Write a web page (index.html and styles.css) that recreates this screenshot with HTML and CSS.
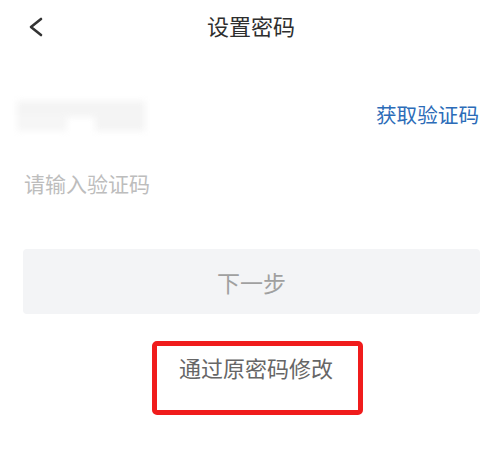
FILE: index.html
```html
<!DOCTYPE html>
<html lang="zh">
<head>
<meta charset="utf-8">
<link rel="stylesheet" href="styles.css">
</head>
<body>
<div class="page">
  <header class="header">
    <svg class="back" width="16" height="20" viewBox="0 0 16 20"><path d="M13 2 L3 10 L13 18" fill="none" stroke="#333" stroke-width="2.6" stroke-linecap="round" stroke-linejoin="round"/></svg>
    <h1 class="title">设置密码</h1>
  </header>
  <div class="phone-row">
    <div class="phone-blur">
      <span class="blur-a"></span>
      <span class="blur-b"></span>
      <span class="blur-c"></span>
    </div>
    <span class="get-code">获取验证码</span>
  </div>
  <div class="code-row">
    <span class="placeholder">请输入验证码</span>
  </div>
  <button class="next">下一步</button>
  <div class="alt-wrap">
    <div class="alt-box">通过原密码修改</div>
  </div>
</div>
</body>
</html>
```
FILE: styles.css
```css
html, body {
  margin: 0;
  padding: 0;
  background: #fff;
}
body {
  font-family: "Noto Sans CJK SC", "Noto Sans", sans-serif;
}
.page {
  width: 494px;
  height: 471px;
  display: flex;
  flex-direction: column;
}
.header {
  position: relative;
  height: 50px;
  display: flex;
  align-items: center;
  justify-content: center;
  padding-left: 8px;
}
.back {
  position: absolute;
  left: 28px;
  top: 17px;
}
.title {
  margin: 0;
  font-size: 22px;
  font-weight: 400;
  color: #2e2e2e;
  line-height: 1;
}
.phone-row {
  display: flex;
  align-items: center;
  justify-content: space-between;
  height: 36px;
  margin-top: 48px;
  padding: 0 15px 0 15px;
}
.phone-blur {
  width: 132px;
  height: 34px;
  position: relative;
  filter: blur(3px);
}
.blur-a {
  position: absolute;
  left: 2px;
  top: 2px;
  width: 128px;
  height: 16px;
  background: #f4f4f4;
}
.blur-b {
  position: absolute;
  left: 2px;
  top: 16px;
  width: 50px;
  height: 16px;
  background: #f6f6f6;
}
.blur-c {
  position: absolute;
  left: 80px;
  top: 16px;
  width: 50px;
  height: 16px;
  background: #f4f4f4;
}
.get-code {
  font-size: 20.6px;
  color: #2c6cb8;
  line-height: 1;
  margin-top: -4px;
}
.code-row {
  height: 30px;
  margin-top: 35px;
  padding-left: 24px;
  display: flex;
  align-items: center;
}
.placeholder {
  font-size: 21px;
  color: #bdbdbd;
  line-height: 1;
  margin-top: -2px;
}
.next {
  margin: 50px 14px 0 23px;
  height: 65px;
  border: none;
  border-radius: 4px;
  background: #f3f4f6;
  font-family: inherit;
  font-size: 23px;
  color: #a0a0a0;
  padding: 0;
}
.alt-wrap {
  display: flex;
  justify-content: flex-start;
  padding-left: 152px;
  margin-top: 27px;
}
.alt-box {
  width: 179px;
  height: 54px;
  padding: 10px 0 0 22px;
  border: 5px solid #f01c1c;
  border-radius: 5px;
  font-size: 22px;
  color: #666;
  line-height: 1;
  display: flex;
  align-items: flex-start;
}
```
